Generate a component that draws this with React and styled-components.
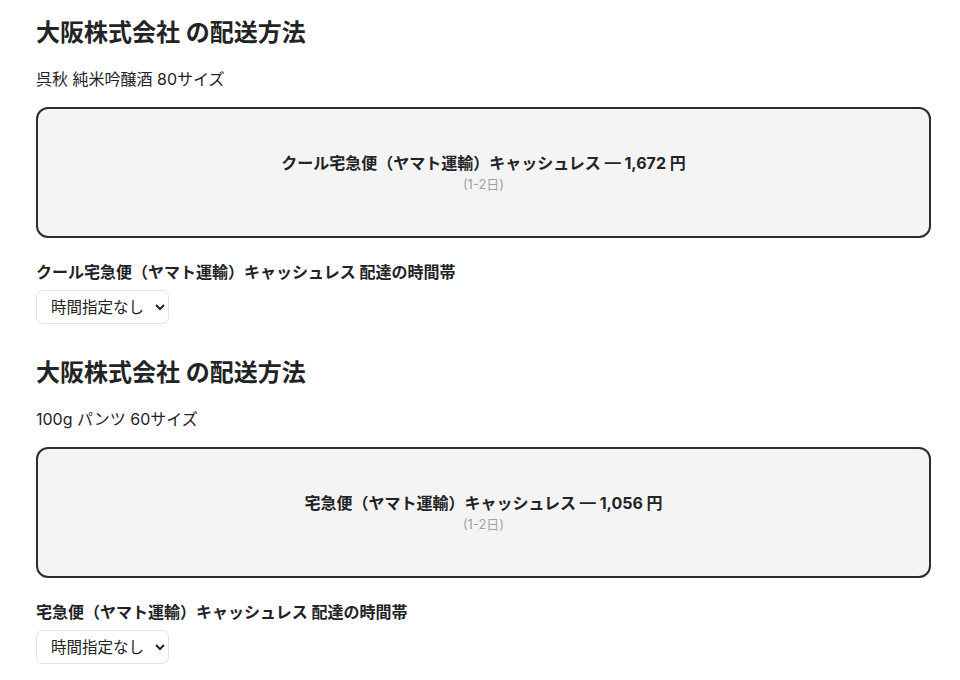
import React from "react";
import styled, { createGlobalStyle } from "styled-components";

const Global = createGlobalStyle`
  html, body { margin: 0; padding: 0; background: #fff; }
  body {
    font-family: Inter, "Noto Sans CJK JP", sans-serif;
    color: #222326;
  }
  * { box-sizing: border-box; }
`;

const Page = styled.div`
  width: 931px;
  padding: 18px 0 0 36px;
  display: flex;
  flex-direction: column;
  gap: 34px;
`;

const Section = styled.section`
  display: flex;
  flex-direction: column;
`;

const Heading = styled.h2`
  margin: 0;
  font-size: 24px;
  line-height: 29px;
  font-weight: 700;
`;

const Item = styled.p`
  margin: 20px 0 0;
  font-size: 16px;
  line-height: 24px;
`;

const Card = styled.div`
  margin-top: 16px;
  height: 131px;
  border: 2px solid #2b2d33;
  border-radius: 12px;
  background: #f4f4f4;
  display: flex;
  flex-direction: column;
  align-items: center;
  justify-content: center;
  gap: 3px;
`;

const CardTitle = styled.div`
  font-size: 16px;
  line-height: 20px;
  font-weight: 700;
`;

const CardSub = styled.div`
  font-size: 13px;
  line-height: 17px;
  color: #9ea3ab;
`;

const Label = styled.label`
  margin-top: 22px;
  font-size: 16px;
  line-height: 24px;
  font-weight: 700;
`;

const Select = styled.select`
  margin-top: 6px;
  align-self: flex-start;
  width: 133px;
  height: 34px;
  padding: 0 3px 0 10px;
  font-family: Inter, "Noto Sans CJK JP", sans-serif;
  font-size: 15.5px;
  color: #222326;
  background: #fff;
  border: 1px solid #e2e2e5;
  border-radius: 7px;
`;

const data = [
  {
    item: "呉秋 純米吟醸酒 80サイズ",
    method: "クール宅急便（ヤマト運輸）キャッシュレス",
    price: "1,672",
  },
  {
    item: "100g パンツ 60サイズ",
    method: "宅急便（ヤマト運輸）キャッシュレス",
    price: "1,056",
  },
];

export default function App() {
  return (
    <>
      <Global />
      <Page>
        {data.map((d, i) => (
          <Section key={i}>
            <Heading>大阪株式会社 の配送方法</Heading>
            <Item>{d.item}</Item>
            <Card>
              <CardTitle>
                {d.method} — {d.price} 円
              </CardTitle>
              <CardSub>(1-2日)</CardSub>
            </Card>
            <Label>{d.method} 配達の時間帯</Label>
            <Select defaultValue="none">
              <option value="none">時間指定なし</option>
            </Select>
          </Section>
        ))}
      </Page>
    </>
  );
}
